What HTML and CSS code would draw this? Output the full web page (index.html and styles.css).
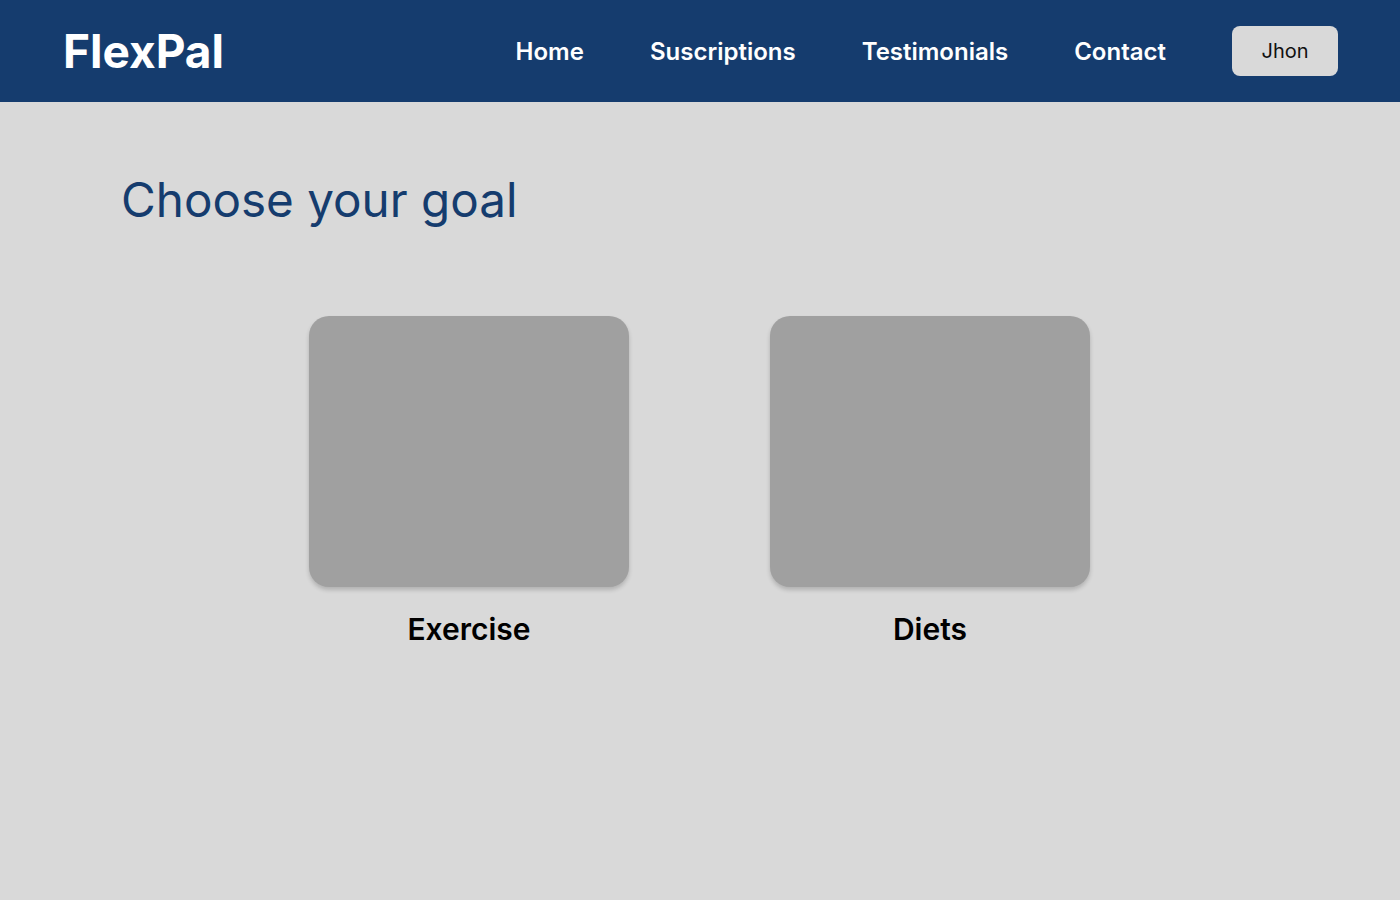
FILE: index.html
```html
<!DOCTYPE html>
<html lang="en">
<head>
<meta charset="utf-8">
<title>FlexPal</title>
<link rel="stylesheet" href="styles.css">
</head>
<body>
<header class="topbar">
  <div class="logo">FlexPal</div>
  <nav class="nav">
    <a class="nav-link" href="#">Home</a>
    <a class="nav-link" href="#">Suscriptions</a>
    <a class="nav-link" href="#">Testimonials</a>
    <a class="nav-link" href="#">Contact</a>
    <button class="user-btn">Jhon</button>
  </nav>
</header>
<main class="main">
  <h1 class="title">Choose your goal</h1>
  <div class="goals">
    <div class="goal">
      <div class="goal-card"></div>
      <div class="goal-label">Exercise</div>
    </div>
    <div class="goal">
      <div class="goal-card"></div>
      <div class="goal-label">Diets</div>
    </div>
  </div>
</main>
</body>
</html>
```
FILE: styles.css
```css
* { box-sizing: border-box; }
html, body { margin: 0; padding: 0; }
body {
  font-family: Inter, "Noto Sans", sans-serif;
  background: #d9d9d9;
  width: 1400px;
  height: 900px;
  overflow: hidden;
}
.topbar {
  height: 102px;
  background: #153c6e;
  display: flex;
  align-items: center;
  justify-content: space-between;
  padding: 0 62px 0 63px;
}
.logo {
  color: #fff;
  font-weight: 700;
  font-size: 46px;
}
.nav {
  display: flex;
  align-items: center;
  gap: 66px;
}
.nav-link {
  color: #fff;
  text-decoration: none;
  font-size: 24px;
  font-weight: 600;
}
.user-btn {
  width: 106px;
  height: 50px;
  border: none;
  border-radius: 8px;
  background: #d9d9d9;
  color: #111;
  font-family: Inter, sans-serif;
  font-size: 20px;
  font-weight: 400;
}
.main {
  padding: 68px 0 0 121px;
}
.title {
  margin: 0;
  color: #153c6e;
  font-size: 47.6px;
  font-weight: 400;
  line-height: 60px;
}
.goals {
  display: flex;
  justify-content: center;
  gap: 141px;
  margin-top: 86px;
  margin-left: -122px;
}
.goal {
  display: flex;
  flex-direction: column;
  align-items: center;
}
.goal-card {
  width: 320px;
  height: 271px;
  background: #a0a0a0;
  border-radius: 20px;
  box-shadow: 0 3px 4px rgba(0,0,0,0.18);
}
.goal-label {
  margin-top: 24px;
  font-size: 30px;
  font-weight: 600;
  color: #000;
}
```
